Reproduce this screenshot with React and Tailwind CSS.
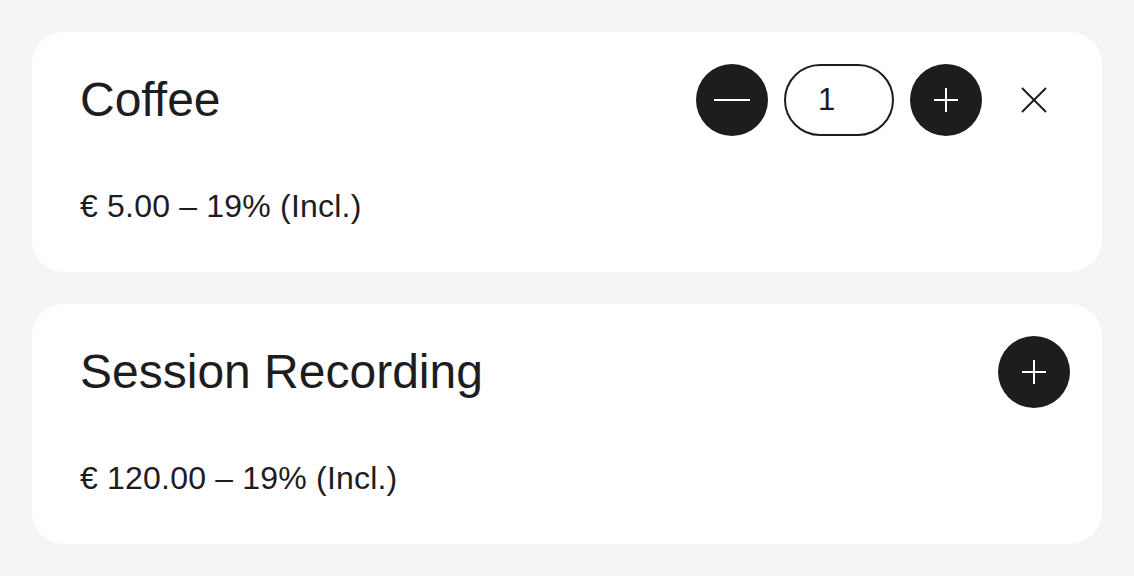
import React from "react";

const font = { fontFamily: '"Liberation Sans", Arial, sans-serif' };

function MinusIcon() {
  return (
    <svg width="36" height="36" viewBox="0 0 36 36" fill="none">
      <line x1="0" y1="18" x2="36" y2="18" stroke="white" strokeWidth="2" />
    </svg>
  );
}

function PlusIcon() {
  return (
    <svg width="24" height="24" viewBox="0 0 24 24" fill="none">
      <line x1="0" y1="12" x2="24" y2="12" stroke="white" strokeWidth="2" />
      <line x1="12" y1="0" x2="12" y2="24" stroke="white" strokeWidth="2" />
    </svg>
  );
}

function XIcon() {
  return (
    <svg width="26" height="26" viewBox="0 0 26 26" fill="none">
      <line x1="1" y1="1" x2="25" y2="25" stroke="#1d1d1f" strokeWidth="2" />
      <line x1="25" y1="1" x2="1" y2="25" stroke="#1d1d1f" strokeWidth="2" />
    </svg>
  );
}

function Card({ title, price, children }) {
  return (
    <div className="bg-white rounded-[32px] pl-12 pr-8 pt-8 pb-[46px]">
      <div className="flex items-center justify-between h-[72px]">
        <div className="text-[48px] leading-[72px] text-[#1d1d1f]">{title}</div>
        <div className="flex items-center gap-4">{children}</div>
      </div>
      <div className="mt-[50px] text-[32px] leading-[40px] tracking-[0.2px] text-[#1d1d1f]">{price}</div>
    </div>
  );
}

export default function App() {
  return (
    <div className="min-h-[576px] bg-[#f5f4f2] p-8 flex flex-col gap-8" style={font}>
      <Card title="Coffee" price="€ 5.00 – 19% (Incl.)">
        <button className="w-[72px] h-[72px] rounded-full bg-[#1d1d1f] flex items-center justify-center">
          <MinusIcon />
        </button>
        <div className="w-[110px] h-[72px] rounded-full border-2 border-[#1d1d1f] flex items-center pl-[32px] text-[31px] text-[#1d1d1f]">
          1
        </div>
        <button className="w-[72px] h-[72px] rounded-full bg-[#1d1d1f] flex items-center justify-center">
          <PlusIcon />
        </button>
        <button className="w-[72px] h-[72px] flex items-center justify-center">
          <XIcon />
        </button>
      </Card>
      <Card title="Session Recording" price="€ 120.00 – 19% (Incl.)">
        <button className="w-[72px] h-[72px] rounded-full bg-[#1d1d1f] flex items-center justify-center">
          <PlusIcon />
        </button>
      </Card>
    </div>
  );
}
